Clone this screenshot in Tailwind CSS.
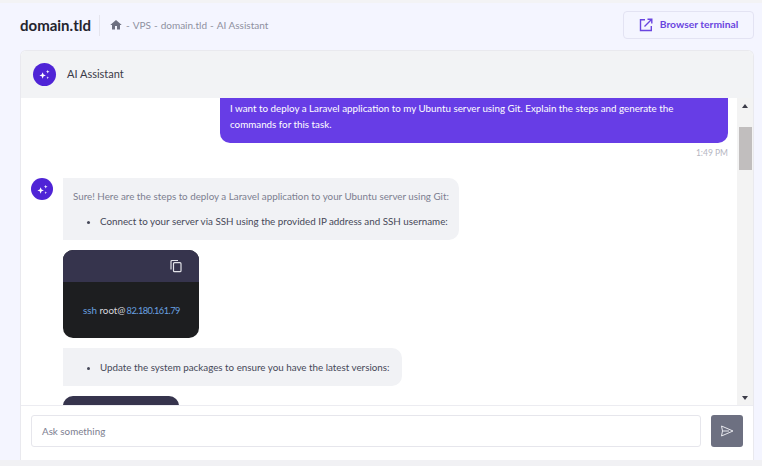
<!DOCTYPE html>
<html>
<head>
<meta charset="utf-8">
<script src="https://cdn.jsdelivr.net/npm/@tailwindcss/browser@4"></script>
</head>
<body class="m-0 overflow-hidden bg-[#f4f5ff]">
<div class="w-[762px] h-[466px] flex flex-col font-['Lato',sans-serif] overflow-hidden border-t-[3px] border-[#f3f3f5]">
  <header class="h-[44px] mb-[3px] shrink-0 flex items-center pl-[20px] pr-[8px]">
    <span class="text-[15px] font-bold leading-none text-[#24242e] w-[69px] whitespace-nowrap">domain.tld</span>
    <div class="w-px h-[21px] bg-[#e5e5ee] ml-[10px] mr-[10px]"></div>
    <svg class="w-[12px] h-[12px] mr-[4px]" viewBox="0 0 24 24" fill="#6d7081"><path d="M10 21v-7h4v7h6v-9h3.500L12 2 .5 12H4v9z"/></svg>
    <span class="flex items-center gap-[3px] text-[10px] text-[#8e90a0] whitespace-nowrap">
      <span>-</span><span>VPS</span><span>-</span><span>domain.tld</span><span>-</span><span>AI Assistant</span>
    </span>
    <button class="ml-auto w-[131px] h-[28px] border border-[#e3e3f3] rounded-[4px] flex items-center justify-center gap-[7px] text-[#6a45e0] text-[10.300px] font-bold whitespace-nowrap">
      <svg class="w-[14px] h-[14px]" viewBox="0 0 14 14" fill="none" stroke="#6a45e0" stroke-width="1.400"><path d="M6 1.700H1.500v10.800h10.800V8"/><path d="M5.500 8.500 12.500 1.500M8.500 1.200h4.300v4.300"/></svg>
      Browser terminal
    </button>
  </header>

  <main class="mx-[20px] w-[734px] h-[410px] shrink-0 border border-b-0 border-[#e9e9ee] rounded-t-[6px] bg-white flex flex-col overflow-hidden">
    <div class="h-[47px] shrink-0 bg-[#f2f3f5] flex items-center pl-[12px]">
      <div class="w-[23px] h-[23px] rounded-full bg-[#4f24d6] flex items-center justify-center">
        <svg class="w-[13px] h-[13px]" viewBox="0 0 14 14" fill="#fff"><path d="M5 4.500 6 7l2.500 1L6 9l-1 2.500L4 9 1.500 8 4 7z"/><path d="M10.500 2l.5 1.500 1.500.5-1.500.5-.5 1.500-.5-1.500L8.500 4l1.500-.5z"/><path d="M10.500 9l.4 1.100 1.100.4-1.100.4-.4 1.100-.4-1.100L9 10.500l1.100-.4z"/></svg>
      </div>
      <span class="ml-[11px] text-[11px] text-[#3a3a48]">AI Assistant</span>
    </div>

    <div class="flex-1 min-h-0 flex">
      <div class="flex-1 min-w-0 overflow-hidden relative pl-[10px] pr-[9px]">
        <div class="ml-[189px] h-[45px] bg-[#673de6] rounded-b-[10px] px-[10px] pt-[2px] text-white text-[9.800px] leading-[16px]">
          I want to deploy a Laravel application to my Ubuntu server using Git. Explain the steps and generate the<br>commands for this task.
        </div>
        <div class="text-right text-[8.500px] text-[#b5b6c2] mt-[4px] h-[13px] leading-[13px]">1:49 PM</div>
        <div class="flex gap-[10px] mt-[18px]">
          <div class="w-[22px] h-[22px] shrink-0 rounded-full bg-[#4f24d6] flex items-center justify-center">
            <svg class="w-[13px] h-[13px]" viewBox="0 0 14 14" fill="#fff"><path d="M5 4.500 6 7l2.500 1L6 9l-1 2.500L4 9 1.500 8 4 7z"/><path d="M10.500 2l.5 1.500 1.500.5-1.500.5-.5 1.500-.5-1.500L8.500 4l1.500-.5z"/><path d="M10.500 9l.4 1.100 1.100.4-1.100.4-.4 1.100-.4-1.100L9 10.500l1.100-.4z"/></svg>
          </div>
          <div class="flex flex-col items-start">
            <div class="w-[396px] h-[62px] bg-[#f1f2f5] rounded-r-[10px] pl-[10px] pt-[11px] text-[9.800px] leading-[14px]">
              <p class="text-[#7c7e90] whitespace-nowrap">Sure! Here are the steps to deploy a Laravel application to your Ubuntu server using Git:</p>
              <ul class="list-disc pl-[27px] mt-[11px] text-[#464858]"><li class="whitespace-nowrap">Connect to your server via SSH using the provided IP address and SSH username:</li></ul>
            </div>
            <div class="w-[136px] h-[88px] mt-[10px] rounded-[10px] overflow-hidden bg-[#1d1e20] flex flex-col">
              <div class="h-[32px] bg-[#36344d] flex items-center justify-end pr-[16px]">
                <svg class="w-[14px] h-[14px]" viewBox="0 0 14 14" fill="none" stroke="#e2e2e8" stroke-width="1.200"><path d="M2 10.500V2.500q0-1 1-1h6"/><rect x="4.500" y="3.700" width="7.500" height="9" rx="1"/></svg>
              </div>
              <div class="flex-1 flex items-center pl-[20px] pt-px text-[9.800px] whitespace-nowrap">
                <span class="text-[#6aa2e0]">ssh</span><span class="text-[#d8d8de]">&nbsp;root@</span><span class="text-[#6aa2e0] ml-[1px] text-[9.200px] tracking-[-0.5px]">82.180.161.79</span>
              </div>
            </div>
            <div class="w-[339px] h-[38px] mt-[10px] bg-[#f1f2f5] rounded-r-[10px] pl-[10px] flex items-center text-[9.800px] text-[#464858]">
              <ul class="list-disc pl-[27px]"><li class="whitespace-nowrap">Update the system packages to ensure you have the latest versions:</li></ul>
            </div>
            <div class="w-[116px] h-[20px] mt-[10px] bg-[#36344d] rounded-t-[10px]"></div>
          </div>
        </div>
      </div>
      <div class="w-[16px] shrink-0 bg-[#f3f3f3] flex flex-col items-center relative">
        <div class="w-0 h-0 mt-[6px] border-x-[3.500px] border-x-transparent border-b-[4px] border-b-[#3c3c48]"></div>
        <div class="w-[13px] h-[43px] mt-[19px] bg-[#c1bebe]"></div>
        <div class="w-0 h-0 mt-auto mb-[5px] border-x-[3.500px] border-x-transparent border-t-[4px] border-t-[#3c3c48]"></div>
      </div>
    </div>

    <div class="h-[55px] shrink-0 border-t border-[#ececf1] flex items-start pl-[10px] pr-[10px] pt-[9px] bg-white">
      <div class="w-[670px] h-[32px] border border-[#e6e6ec] rounded-[3px] flex items-center pl-[10px] text-[9.800px] text-[#7c7e90]">Ask something</div>
      <button class="ml-[10px] w-[32px] h-[32px] rounded-[3px] bg-[#6d7081] flex items-center justify-center">
        <svg class="w-[16px] h-[16px]" viewBox="0 0 16 16" fill="none" stroke="#e8e8ee" stroke-width="1"><path d="M2.500 3 14 8 2.500 13 3.500 8zM3.500 8H10"/></svg>
      </button>
    </div>
  </main>
  <div class="flex-1 bg-[#f1f1f4]"></div>
</div>
</body>
</html>
